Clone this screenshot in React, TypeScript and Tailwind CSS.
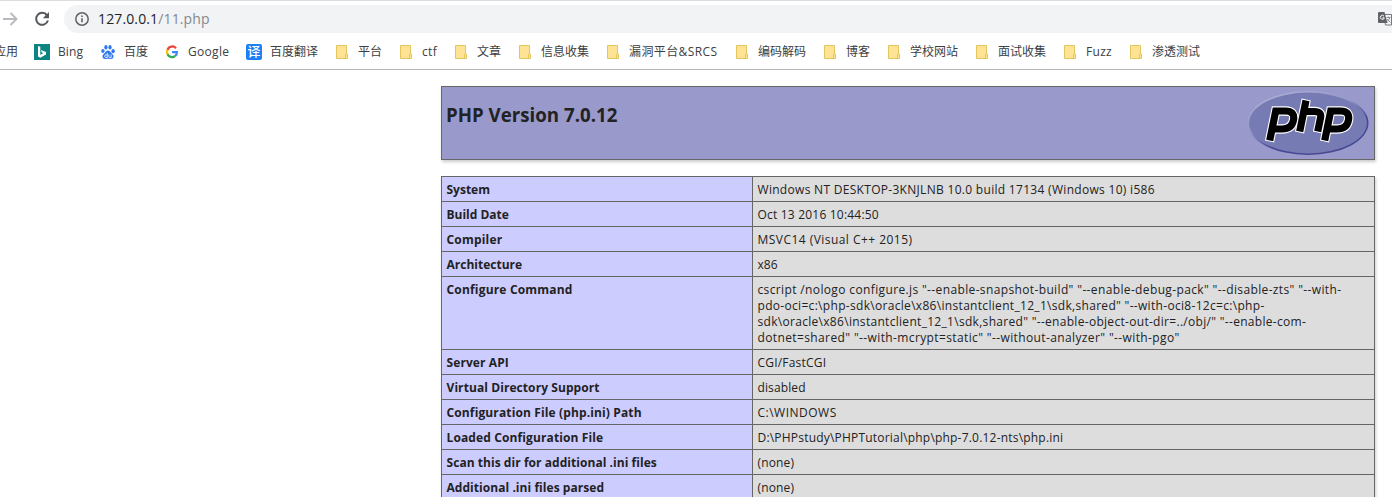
import React from 'react';

const rows: { k: string; kc: string; v: { t: string; c: string }[] }[] = [
  { k: 'System', kc: '', v: [{ t: 'Windows NT DESKTOP-3KNJLNB 10.0 build 17134 (Windows 10) i586', c: 'tracking-[0.3px]' }] },
  { k: 'Build Date', kc: '', v: [{ t: 'Oct 13 2016 10:44:50', c: 'tracking-[0.2px]' }] },
  { k: 'Compiler', kc: 'tracking-[0.2px]', v: [{ t: 'MSVC14 (Visual C++ 2015)', c: 'tracking-[0.46px]' }] },
  { k: 'Architecture', kc: '', v: [{ t: 'x86', c: '' }] },
  {
    k: 'Configure Command',
    kc: 'tracking-[0.18px]',
    v: [
      { t: 'cscript /nologo configure.js "--enable-snapshot-build" "--enable-debug-pack" "--disable-zts" "--with-', c: 'tracking-[0.365px]' },
      { t: 'pdo-oci=c:\\php-sdk\\oracle\\x86\\instantclient_12_1\\sdk,shared" "--with-oci8-12c=c:\\php-', c: 'tracking-[0.31px]' },
      { t: 'sdk\\oracle\\x86\\instantclient_12_1\\sdk,shared" "--enable-object-out-dir=../obj/" "--enable-com-', c: 'tracking-[0.3px]' },
      { t: 'dotnet=shared" "--with-mcrypt=static" "--without-analyzer" "--with-pgo"', c: 'tracking-[0.38px]' },
    ],
  },
  { k: 'Server API', kc: 'tracking-[0.1px]', v: [{ t: 'CGI/FastCGI', c: 'tracking-[0.2px]' }] },
  { k: 'Virtual Directory Support', kc: 'tracking-[0.08px]', v: [{ t: 'disabled', c: 'tracking-[0.12px]' }] },
  { k: 'Configuration File (php.ini) Path', kc: 'tracking-[0.13px]', v: [{ t: 'C:\\WINDOWS', c: 'tracking-[0.5px]' }] },
  { k: 'Loaded Configuration File', kc: 'tracking-[0.12px]', v: [{ t: 'D:\\PHPstudy\\PHPTutorial\\php\\php-7.0.12-nts\\php.ini', c: 'tracking-[0.2px]' }] },
  { k: 'Scan this dir for additional .ini files', kc: 'tracking-[0.05px]', v: [{ t: '(none)', c: 'tracking-[0.15px]' }] },
  { k: 'Additional .ini files parsed', kc: 'tracking-[0.05px]', v: [{ t: '(none)', c: 'tracking-[0.15px]' }] },
];

function FolderIcon() {
  return (
    <svg width="16" height="16" viewBox="0 0 16 16">
      <path d="M2.500 1.500h10v8.500h1v4.500h-11z" fill="#fee394" stroke="#e3c75e" />
      <path d="M11.500 14V11q0-1 1-1" fill="none" stroke="#e3c75e" />
    </svg>
  );
}

function BingIcon() {
  return (
    <svg width="16" height="16" viewBox="0 0 16 16">
      <path d="M0 0h16v16H0z" fill="#0c8484" />
      <path d="M4 2l2.300.8v8.100l3-1.800-1.500-.7-.9-2.300 5.100 1.800v2.500l-5.700 3.400L4 12.500z" fill="#fff" />
    </svg>
  );
}

function BaiduIcon() {
  return (
    <svg width="16" height="16" viewBox="0 0 16 16" fill="#2f78f0">
      <ellipse cx="2.900" cy="7" rx="1.700" ry="2.100" />
      <ellipse cx="5.900" cy="3.200" rx="1.600" ry="2.200" />
      <ellipse cx="10" cy="3.200" rx="1.600" ry="2.200" />
      <ellipse cx="13.100" cy="7.200" rx="1.700" ry="2.100" />
      <path d="M8 6.600c1.600 0 2.200 1.300 3.200 2.400 1.200 1.200 2.600 1.900 2.300 3.800-.3 1.800-1.800 2.400-3.300 2.100-1.500-.3-2.900-.3-4.400 0-1.500.3-3-.3-3.300-2.100-.3-1.900 1.100-2.600 2.300-3.800C5.800 7.900 6.400 6.600 8 6.600z" />
      <path d="M7.300 9v4.500H5.800q-1.100 0-1.100-1.300t1.100-1.300h1.300M8.800 10.500v2q0 1 1 1h1.400v-3" fill="none" stroke="#fff" strokeWidth=".8" />
    </svg>
  );
}

function GoogleIcon() {
  return (
    <svg width="16" height="16" viewBox="0 0 16 16" fill="none" strokeWidth="2.300">
      <path d="M12 4.200A5 5 0 0 0 3.500 5.800" stroke="#ea4335" />
      <path d="M3.500 5.800a5 5 0 0 0 0 4.400" stroke="#fbbc05" />
      <path d="M3.500 10.200a5 5 0 0 0 7.700 1.800" stroke="#34a853" />
      <path d="M11.200 12A5 5 0 0 0 12.900 8.100H8" stroke="#4285f4" />
    </svg>
  );
}

function TranslateBadge() {
  return (
    <span className="flex size-4 items-center justify-center rounded-[2px] bg-[#1c80f5] pb-px text-[13px] leading-[14px] font-medium text-white">译</span>
  );
}

const folder = <FolderIcon />;
const bookmarks: { icon: React.ReactNode; label: string; w: string }[] = [
  { icon: <BingIcon />, label: 'Bing', w: 'w-[26px] tracking-[0.1px]' },
  { icon: <BaiduIcon />, label: '百度', w: 'w-[24px]' },
  { icon: <GoogleIcon />, label: 'Google', w: 'w-[42px] tracking-[0.3px]' },
  { icon: <TranslateBadge />, label: '百度翻译', w: 'w-[48px]' },
  { icon: folder, label: '平台', w: 'w-[24px]' },
  { icon: folder, label: 'ctf', w: 'w-[15px] tracking-[0.3px]' },
  { icon: folder, label: '文章', w: 'w-[24px]' },
  { icon: folder, label: '信息收集', w: 'w-[48px]' },
  { icon: folder, label: '漏洞平台&SRCS', w: 'w-[89px] tracking-[0.4px]' },
  { icon: folder, label: '编码解码', w: 'w-[48px]' },
  { icon: folder, label: '博客', w: 'w-[24px]' },
  { icon: folder, label: '学校网站', w: 'w-[48px]' },
  { icon: folder, label: '面试收集', w: 'w-[48px]' },
  { icon: folder, label: 'Fuzz', w: 'w-[26px] tracking-[0.3px]' },
  { icon: folder, label: '渗透测试', w: 'w-[48px]' },
];

function Toolbar() {
  return (
    <div className="flex h-[34px] items-start border-t border-[#dcdde0] pt-1">
      <svg className="mt-[5px] shrink-0" width="20" height="18" viewBox="0 0 20 18" fill="none" stroke="#b8babd" strokeWidth="1.900">
        <path d="M3 9h13M10.500 3l6 6-6 6" />
      </svg>
      <svg className="mt-[5px] ml-[13px] shrink-0" width="18" height="18" viewBox="0 0 18 18">
        <path d="M14 5.300A6 6 0 1 0 14.900 10.500" fill="none" stroke="#55585c" strokeWidth="2" />
        <path d="M16 2v6.200h-6.200z" fill="#55585c" />
      </svg>
      <div className="ml-[13px] flex h-7 flex-1 items-center rounded-l-full bg-[#f1f3f4] pl-[10px]">
        <svg width="16" height="16" viewBox="0 0 16 16">
          <circle cx="8" cy="8" r="6.200" fill="none" stroke="#5f6368" strokeWidth="1.500" />
          <path d="M7.200 7.200h1.600v4H7.200zM7.200 4.500h1.600v1.600H7.200z" fill="#5f6368" />
        </svg>
        <span className="ml-2 flex-1 text-[14px] leading-5 tracking-[0.13px] whitespace-nowrap text-[#232427]">
          127.0.0.1<span className="text-[#85888c]">/11.php</span>
        </span>
        <svg className="shrink-0" width="14" height="14" viewBox="0 0 14 14">
          <path d="M5.500 2.500h8v10.500h-6z" fill="#f4f5f6" stroke="#77797c" />
          <path d="M1 0h5.500l3 11H1q-1 0-1-1V1q0-1 1-1z" fill="#5f6368" />
          <path d="M6 4.200a2 2 0 1 0 .3 1.600H4.500" fill="none" stroke="#fff" />
          <path d="M8.500 5.500h4M10.500 4.500v1M11.800 5.500q-.6 2.500-2.600 4M9.300 7l3 3.500" fill="none" stroke="#77797c" strokeWidth=".8" />
        </svg>
      </div>
    </div>
  );
}

function PhpLogo() {
  return (
    <svg width="122" height="66" viewBox="0 0 122 66">
      <defs>
        <linearGradient id="rim" x1="0.200" y1="0" x2="0.800" y2="1">
          <stop offset="0" stopColor="#aeb2d5" />
          <stop offset=".4" stopColor="#9297c8" />
          <stop offset=".65" stopColor="#484893" />
          <stop offset="1" stopColor="#484893" />
        </linearGradient>
      </defs>
      <ellipse cx="61" cy="33" rx="60.500" ry="32" fill="url(#rim)" />
      <ellipse cx="61" cy="33" rx="58.900" ry="30.400" fill="#777bb3" />
      <g fill="none">
        <g stroke="#fff" strokeWidth="9.400">
          <path d="M22.500 51.500L28.700 21H38.500q9.500 0 8 9T35 39H25" />
          <path d="M52.500 42.500L59.200 9.500M57 21.500H67.500q7.500 0 6 6.500L70.500 42.500" />
          <path d="M77.500 51.500L83.700 21H93.500q9.500 0 8 9T90 39H80" />
        </g>
        <g stroke="#000" strokeWidth="7.200">
          <path d="M22.700 50.500L28.700 21H38.500q9.500 0 8 9T35 39H25" />
          <path d="M52.700 41.500L59 10.500M57 21.500H67.500q7.500 0 6 6.500L70.700 41.500" />
          <path d="M77.700 50.500L83.700 21H93.500q9.500 0 8 9T90 39H80" />
        </g>
      </g>
    </svg>
  );
}

export default function App() {
  return (
    <div className="h-[497px] w-[1392px] overflow-hidden bg-white font-['Open_Sans','Noto_Sans_CJK_SC',sans-serif] text-[#222]">
      <Toolbar />
      <div className="flex h-[36px] items-center gap-4 border-b border-[#b3b4b6] text-[12px] text-[#3c4043]">
        <span className="flex w-[18px] shrink-0 justify-end whitespace-nowrap">应用</span>
        {bookmarks.map((b) => (
          <div key={b.label} className="flex shrink-0 items-center gap-2">
            <span className="size-4 shrink-0">{b.icon}</span>
            <span className={'whitespace-nowrap ' + b.w}>{b.label}</span>
          </div>
        ))}
      </div>
      <main className="mt-4 ml-[441px] w-[934px]">
        <header className="flex h-[74px] justify-between border border-[#666] bg-[#9999cc] pt-[3px] pr-[5px] pl-[4px] shadow-[1px_2px_3px_#ccc]">
          <h1 className="mt-[13px] text-[18.700px] leading-6 font-bold">PHP Version 7.0.12</h1>
          <PhpLogo />
        </header>
        <section className="mt-4 border-x border-t border-[#666] shadow-[1px_2px_3px_#ccc]">
          {rows.map((r) => (
            <div key={r.k} className="flex border-b border-[#666] text-[12px] leading-4">
              <div className="w-[311px] shrink-0 border-r border-[#666] bg-[#ccccff] pt-[5px] pb-[3px] pl-[4.500px] font-bold whitespace-nowrap">
                <span className={'block ' + r.kc}>{r.k}</span>
              </div>
              <div className="flex-1 bg-[#ddd] pt-[5px] pb-[3px] pl-[4.500px] whitespace-nowrap">
                {r.v.map((l) => (
                  <div key={l.t} className={l.c}>{l.t}</div>
                ))}
              </div>
            </div>
          ))}
        </section>
      </main>
    </div>
  );
}
